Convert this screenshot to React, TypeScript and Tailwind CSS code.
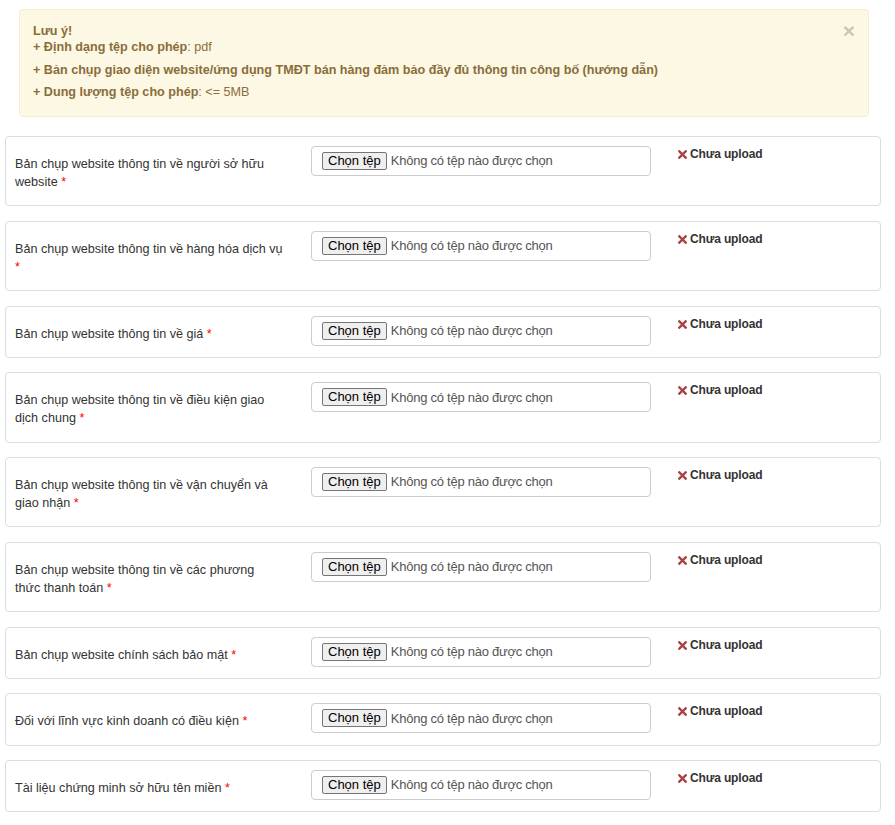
import React from 'react';

type Field = { label: string; starBreak?: boolean };

const fields: Field[] = [
  { label: 'Bản chụp website thông tin về người sở hữu website' },
  { label: 'Bản chụp website thông tin về hàng hóa dịch vụ', starBreak: true },
  { label: 'Bản chụp website thông tin về giá' },
  { label: 'Bản chụp website thông tin về điều kiện giao dịch chung' },
  { label: 'Bản chụp website thông tin về vận chuyển và giao nhận' },
  { label: 'Bản chụp website thông tin về các phương thức thanh toán' },
  { label: 'Bản chụp website chính sách bảo mật' },
  { label: 'Đối với lĩnh vực kinh doanh có điều kiện' },
  { label: 'Tài liệu chứng minh sở hữu tên miền' },
];

function RemoveIcon() {
  return (
    <svg width="9" height="9" viewBox="0 0 10 10" className="shrink-0">
      <path d="M1.5 1.5 L8.5 8.5 M8.5 1.5 L1.5 8.5" stroke="#a94442" strokeWidth="2.6" strokeLinecap="square" />
    </svg>
  );
}

function UploadRow({ field }: { field: Field }) {
  return (
    <div className="flex items-start border border-[#dddddd] rounded-[4px] pl-[9px] pt-[9px]">
      <label className="w-[265px] pt-[9px] pb-[14.25px] text-[12.6px] leading-[18px] text-[#333333]">
        {field.starBreak ? (
          <>
            <span className="whitespace-nowrap">{field.label}</span>
            <span className="block text-[#ff0000]">*</span>
          </>
        ) : (
          <>
            {field.label} <span className="text-[#ff0000]">*</span>
          </>
        )}
      </label>
      <div className="ml-[31px] flex h-[30px] w-[340px] items-center rounded-[4px] border border-[#cccccc] pl-[10px] text-[12.6px] text-[#555555]">
        <span className="flex h-[18px] items-center rounded-[2px] border border-[#767676] bg-[#efefef] px-[5px] text-[13px] leading-[16px] text-black">
          Chọn tệp
        </span>
        <span className="ml-[4px] text-[13px] tracking-[-0.25px]">Không có tệp nào được chọn</span>
      </div>
      <div className="ml-[27px] flex items-center gap-[3px] text-[12px] font-bold leading-[17px] tracking-[-0.15px] text-[#333333]">
        <RemoveIcon />
        <span>Chưa upload</span>
      </div>
    </div>
  );
}

export default function App() {
  return (
    <div className="min-h-[825px] w-[895px] bg-white pl-[5px] pt-[9px] font-['Liberation_Sans',Arial,sans-serif]">
      <div className="relative ml-[14px] w-[850px] rounded-[4px] border border-[#faebcc] bg-[#fcf8e3] px-[13px] pt-[13px] pb-[13px] text-[12.6px] text-[#8a6d3b]">
        <span className="absolute right-[13px] top-[10px] text-[21px] font-bold leading-[21px] text-[#cbc7b7]">×</span>
        <div className="font-bold leading-[16px]">Lưu ý!</div>
        <div className="leading-[16px]">
          <b>+ Định dạng tệp cho phép</b>: pdf
        </div>
        <div className="mt-[4px] font-bold leading-[22px]">
          + Bản chụp giao diện website/ứng dụng TMĐT bán hàng đảm bảo đầy đủ thông tin công bố (hướng dẫn)
        </div>
        <div className="leading-[22px]">
          <b>+ Dung lượng tệp cho phép</b>: &lt;= 5MB
        </div>
      </div>
      <div className="mt-[19px] flex w-[876px] flex-col gap-[14.5px]">
        {fields.map((f) => (
          <UploadRow key={f.label} field={f} />
        ))}
      </div>
    </div>
  );
}
